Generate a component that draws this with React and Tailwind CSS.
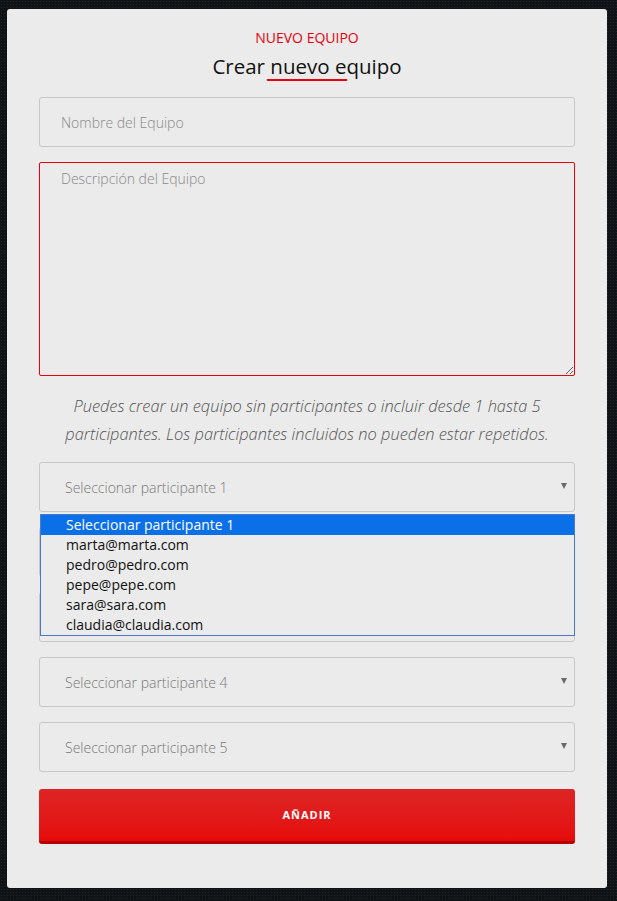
import React from "react";

export default function App() {
  const options = [
    "Seleccionar participante 1",
    "marta@marta.com",
    "pedro@pedro.com",
    "pepe@pepe.com",
    "sara@sara.com",
    "claudia@claudia.com",
  ];

  const selects = [1, 2, 3, 4, 5];

  return (
    <div className="min-h-screen bg-[#0f1316] bg-[radial-gradient(#20272c_1px,transparent_1px)] bg-[size:3px_3px] pt-[9px] pl-[7px] pb-[13px] font-['Open_Sans',sans-serif]">
      <div className="w-[600px] rounded-[3px] bg-[#ebebeb] px-[32px] pt-[19px] pb-[44px]">
        <p className="text-center text-[14px] leading-[20px] text-[#e8000b]">NUEVO EQUIPO</p>
        <h2 className="mt-[4px] text-center text-[20.5px] leading-[28px] font-normal text-[#111]">
          Crear{" "}
          <span className="relative">
            nuevo
            <span className="absolute -left-[3px] -bottom-[1px] h-[2px] w-[80px] bg-[#e8000b]" />
          </span>{" "}
          equipo
        </h2>

        <input
          type="text"
          placeholder="Nombre del Equipo"
          className="mt-[17px] block h-[50px] w-full rounded-[3px] border border-[#c8c8c8] bg-[#ebebeb] px-[21px] text-[14px] font-light text-[#333] placeholder:text-[#888] outline-none"
        />

        <textarea
          placeholder="Descripción del Equipo"
          className="mt-[15px] block h-[214px] w-full rounded-[2px] border border-[#e8000b] bg-[#ebebeb] px-[21px] py-[5px] text-[14px] font-light text-[#333] placeholder:text-[#888] outline-none"
        />

        <p className="mt-[16px] text-center text-[16.4px] leading-[28px] font-light italic text-[#555]">
          Puedes crear un equipo sin participantes o incluir desde 1 hasta 5 participantes. Los participantes incluidos no pueden estar repetidos.
        </p>

        <div className="relative mt-[14px] flex flex-col gap-[15px]">
          {selects.map((n) => (
            <div
              key={n}
              className="flex h-[50px] items-center justify-between rounded-[3px] border border-[#c8c8c8] bg-[#ebebeb] pl-[25px] pr-[7px]"
            >
              <span className={n === 2 || n === 3 ? "invisible text-[14px] font-light text-[#777]" : "text-[14px] font-light text-[#777]"}>
                Seleccionar participante {n}
              </span>
              <svg width="6" height="6" viewBox="0 0 6 6" className="mb-[3px]">
                <path d="M0 0 H6 L3 6 Z" fill="#6b6b6b" />
              </svg>
            </div>
          ))}

          <ul className="absolute left-[1px] right-0 top-[52px] border border-[#4a78cc] bg-[#ebebeb]">
            {options.map((o, i) => (
              <li
                key={o}
                className={
                  i === 0
                    ? "h-[20px] pl-[25px] text-[14px] leading-[20px] bg-[#0b6fe8] text-white"
                    : "h-[20px] pl-[25px] text-[14px] leading-[20px] text-[#111]"
                }
              >
                {o}
              </li>
            ))}
          </ul>
        </div>

        <button className="mt-[17px] block h-[55px] w-full rounded-[3px] border-b-[3px] border-[#b30000] bg-gradient-to-b from-[#dd2424] to-[#e60a0a] text-[11px] font-bold tracking-[1px] text-white">
          AÑADIR
        </button>
      </div>
    </div>
  );
}
